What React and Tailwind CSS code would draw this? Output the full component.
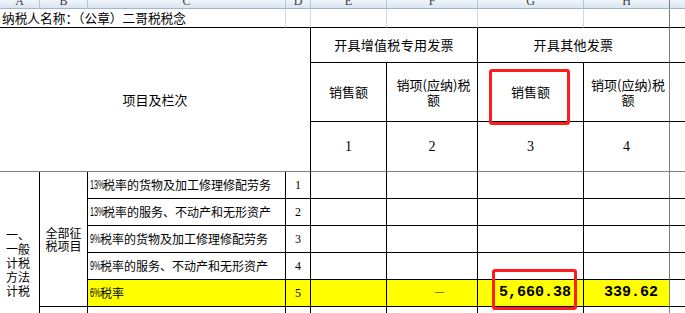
import React from "react";

const cjk = "font-['Noto_Sans_CJK_SC','Noto_Sans',sans-serif]";
const serif = "font-['Liberation_Serif','Noto_Sans_CJK_SC',serif]";

function Head({ col, label, last, end }) {
  return (
    <div
      className={`row-start-1 ${col} overflow-hidden bg-gradient-to-b from-[#f1f5fb] to-[#dbe5f1] border-b border-[#9eb6ce] ${
        end ? "" : last ? "border-r border-r-[#7f7f7f]" : "border-r border-r-[#b7c8db]"
      } text-center ${serif} text-[12px] text-[#3a3a3a]`}
    >
      <span className="block -mt-[5px] leading-[12px]">{label}</span>
    </div>
  );
}

function Narrow({ children, wide }) {
  return (
    <span className={`inline-block ${wide ? "w-[13px]" : "w-[10px]"} overflow-visible whitespace-nowrap`}>
      <span className="inline-block origin-left [transform:scaleX(0.58)] font-['Liberation_Sans',sans-serif] text-[12.5px]">
        {children}
      </span>
    </span>
  );
}

export default function App() {
  const rows = [
    { p: "13%", t: "税率的货物及加工修理修配劳务", n: "1", w: true },
    { p: "13%", t: "税率的服务、不动产和无形资产", n: "2", w: true },
    { p: "9%", t: "税率的货物及加工修理修配劳务", n: "3", w: false },
    { p: "9%", t: "税率的服务、不动产和无形资产", n: "4", w: false },
  ];
  const rowStarts = ["row-start-6", "row-start-7", "row-start-8", "row-start-9"];

  return (
    <div className={`relative w-[685px] h-[313px] overflow-hidden bg-white text-black ${cjk}`}>
      <div className="grid grid-cols-[40px_48px_198px_25px_76px_91px_106px_86px_15px] grid-rows-[9px_19px_35px_59px_50px_27px_27px_27px_27px_27px_6px] w-[685px] h-[313px]">
        {/* column header */}
        <Head col="col-start-1" label="A" />
        <Head col="col-start-2" label="B" />
        <Head col="col-start-3" label="C" />
        <Head col="col-start-4" label="D" />
        <Head col="col-start-5" label="E" />
        <Head col="col-start-6" label="F" />
        <Head col="col-start-7" label="G" />
        <Head col="col-start-8" label="H" last />
        <Head col="col-start-9" label="" end />

        {/* row 1 */}
        <div className="row-start-2 col-start-1 col-span-3 border-b border-b-black border-r border-r-[#d0d7e5] flex items-center pl-[2px] text-[12.7px] whitespace-nowrap">
          纳税人名称：（公章）二哥税税念
        </div>
        <div className="row-start-2 col-start-4 border-b border-b-black border-r border-r-[#d0d7e5]" />
        <div className="row-start-2 col-start-5 border-b border-b-black border-r border-r-[#d0d7e5]" />
        <div className="row-start-2 col-start-6 border-b border-b-black border-r border-r-[#d0d7e5]" />
        <div className="row-start-2 col-start-7 border-b border-b-black border-r border-r-[#d0d7e5]" />
        <div className="row-start-2 col-start-8 border-b border-b-black border-r border-r-[#7f7f7f]" />
        <div className="row-start-2 col-start-9 border-b border-b-black" />

        {/* header block */}
        <div className="row-start-3 row-span-3 col-start-1 col-span-4 border-r border-r-black border-b border-b-[#7f7f7f] flex items-center justify-center text-[13px]">
          项目及栏次
        </div>
        <div className="row-start-3 col-start-5 col-span-2 border-r border-b border-black flex items-center justify-center text-[13px] tracking-[0.3px]">
          开具增值税专用发票
        </div>
        <div className="row-start-3 col-start-7 col-span-2 border-b border-b-black border-r border-r-[#7f7f7f] flex items-center justify-center text-[13px] tracking-[0.3px]">
          开具其他发票
        </div>
        <div className="row-start-3 col-start-9 border-b border-b-black" />

        <div className="row-start-4 col-start-5 border-r border-b border-black flex items-center justify-center text-[13px]">
          销售额
        </div>
        <div className="row-start-4 col-start-6 border-r border-b border-black flex flex-col items-center justify-center text-[13px] leading-[15px] pl-[3px]">
          <span>销项(应纳)税</span>
          <span>额</span>
        </div>
        <div className="row-start-4 col-start-7 border-r border-b border-black flex items-center justify-center text-[13px]">
          销售额
        </div>
        <div className="row-start-4 col-start-8 border-b border-b-black border-r border-r-[#7f7f7f] flex flex-col items-center justify-center text-[13px] leading-[15px] pl-[3px]">
          <span>销项(应纳)税</span>
          <span>额</span>
        </div>
        <div className="row-start-4 col-start-9 border-b border-b-black" />

        <div className={`row-start-5 col-start-5 border-r border-r-black border-b border-b-[#7f7f7f] flex items-center justify-center ${serif} text-[14px]`}>1</div>
        <div className={`row-start-5 col-start-6 border-r border-r-black border-b border-b-[#7f7f7f] flex items-center justify-center ${serif} text-[14px]`}>2</div>
        <div className={`row-start-5 col-start-7 border-r border-r-black border-b border-b-[#7f7f7f] flex items-center justify-center ${serif} text-[14px]`}>3</div>
        <div className={`row-start-5 col-start-8 border-r border-b border-[#7f7f7f] flex items-center justify-center ${serif} text-[14px]`}>4</div>
        <div className="row-start-5 col-start-9 border-b border-b-[#7f7f7f]" />

        {/* left merged labels */}
        <div className="row-start-6 row-span-6 col-start-1 border-r border-r-black flex flex-col items-center pt-[56px] text-[12px] leading-[14px] pr-[3px]">
          <span>一、</span>
          <span>一般</span>
          <span>计税</span>
          <span>方法</span>
          <span>计税</span>
        </div>
        <div className="row-start-6 row-span-5 col-start-2 border-r border-b border-black flex flex-col items-center justify-center text-[12px] leading-[13px]">
          <span>全部征</span>
          <span>税项目</span>
        </div>

        {/* data rows */}
        {rows.map((r, i) => (
          <React.Fragment key={i}>
            <div className={`${rowStarts[i]} col-start-3 border-r border-b border-black flex items-center pl-[2px] text-[12px] whitespace-nowrap overflow-hidden`}>
              <Narrow wide={r.w}>{r.p}</Narrow>
              {r.t}
            </div>
            <div className={`${rowStarts[i]} col-start-4 border-r border-b border-black flex items-center justify-center ${serif} text-[12px]`}>
              {r.n}
            </div>
            <div className={`${rowStarts[i]} col-start-5 border-r border-b border-black`} />
            <div className={`${rowStarts[i]} col-start-6 border-r border-b border-black`} />
            <div className={`${rowStarts[i]} col-start-7 border-r border-b border-black`} />
            <div className={`${rowStarts[i]} col-start-8 border-b border-b-black border-r border-r-[#7f7f7f]`} />
            <div className={`${rowStarts[i]} col-start-9 border-b border-b-black`} />
          </React.Fragment>
        ))}

        {/* yellow row */}
        <div className="row-start-10 col-start-3 bg-[#ffff00] border-r border-b border-black flex items-center pl-[2px] text-[12px] whitespace-nowrap">
          <Narrow>6%</Narrow>
          税率
        </div>
        <div className={`row-start-10 col-start-4 bg-[#ffff00] border-r border-b border-black flex items-center justify-center ${serif} text-[12px]`}>
          5
        </div>
        <div className="row-start-10 col-start-5 bg-[#ffff00] border-r border-b border-black" />
        <div className="row-start-10 col-start-6 bg-[#ffff00] border-r border-b border-black flex items-center justify-end pr-[33px] font-['Liberation_Sans',sans-serif] text-[9px]">
          —
        </div>
        <div className="row-start-10 col-start-7 bg-[#ffff00] border-r border-b border-black flex items-center justify-end pr-[12px] font-['Liberation_Mono',monospace] font-bold text-[15px]">
          5,660.38
        </div>
        <div className="row-start-10 col-start-8 bg-[#ffff00] border-b border-b-black border-r border-r-[#7f7f7f] flex items-center justify-end pr-[11px] font-['Liberation_Mono',monospace] font-bold text-[15px]">
          339.62
        </div>
        <div className="row-start-10 col-start-9 border-b border-b-black" />

        {/* partial last row */}
        <div className="row-start-11 col-start-2 border-r border-r-black" />
        <div className="row-start-11 col-start-3 border-r border-r-black" />
        <div className="row-start-11 col-start-4 border-r border-r-black" />
        <div className="row-start-11 col-start-5 border-r border-r-black" />
        <div className="row-start-11 col-start-6 border-r border-r-black" />
        <div className="row-start-11 col-start-7 border-r border-r-black" />
        <div className="row-start-11 col-start-8 border-r border-r-[#7f7f7f]" />
      </div>

      {/* red highlight boxes */}
      <div className="absolute left-[489px] top-[69px] w-[81px] h-[56px] border-[3px] border-[#ff1c1c] rounded-[3px] pointer-events-none" />
      <div className="absolute left-[492px] top-[269px] w-[85px] h-[41px] border-[3px] border-[#ff1c1c] rounded-[3px] pointer-events-none" />
    </div>
  );
}
